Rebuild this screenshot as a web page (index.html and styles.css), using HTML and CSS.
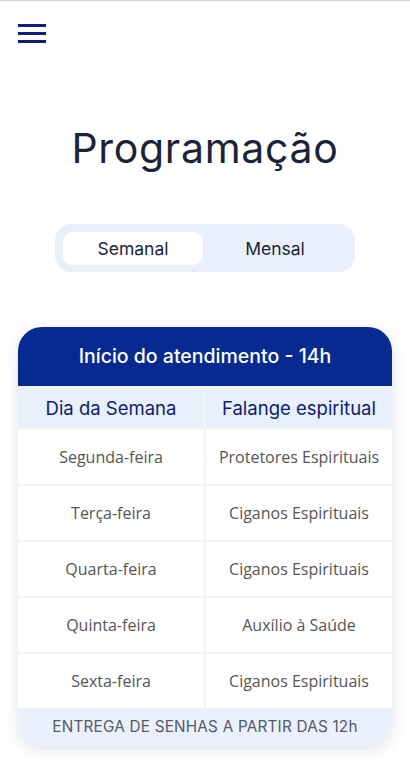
FILE: index.html
```html
<!DOCTYPE html>
<html lang="pt">
<head>
<meta charset="utf-8">
<title>Programação</title>
<link rel="stylesheet" href="styles.css">
</head>
<body>
<div class="page">
  <header class="topbar">
    <button class="menu" aria-label="Menu">
      <svg width="28" height="20" viewBox="0 0 28 20"><rect x="0" y="1" width="28" height="3" fill="#0b1f80"/><rect x="0" y="9" width="28" height="3" fill="#0b1f80"/><rect x="0" y="17" width="28" height="3" fill="#0b1f80"/></svg>
    </button>
  </header>
  <h1 class="title">Programação</h1>
  <div class="toggle">
    <button class="tab active">Semanal</button>
    <button class="tab">Mensal</button>
  </div>
  <section class="card">
    <div class="card-head">Início do atendimento - 14h</div>
    <div class="grid">
      <div class="th">Dia da Semana</div>
      <div class="th">Falange espiritual</div>
      <div class="td">Segunda-feira</div>
      <div class="td">Protetores Espirituais</div>
      <div class="td">Terça-feira</div>
      <div class="td">Ciganos Espirituais</div>
      <div class="td">Quarta-feira</div>
      <div class="td">Ciganos Espirituais</div>
      <div class="td">Quinta-feira</div>
      <div class="td">Auxílio à Saúde</div>
      <div class="td">Sexta-feira</div>
      <div class="td">Ciganos Espirituais</div>
    </div>
    <div class="card-foot">ENTREGA DE SENHAS A PARTIR DAS 12h</div>
  </section>
</div>
</body>
</html>
```
FILE: styles.css
```css
* { box-sizing: border-box; }
html, body { margin: 0; padding: 0; background: #fff; }
body { font-family: "Open Sans", sans-serif; }
.page {
  border-top: 1px solid #cfcfcf;
  min-height: 768px;
  display: flex;
  flex-direction: column;
}
.topbar { padding: 22px 18px 0; height: 52px; }
.menu { border: 0; background: none; padding: 0; display: block; width: 28px; height: 20px; }
.menu svg { display: block; }
.title {
  margin: 71px 0 0;
  text-align: center;
  font-family: Inter, "Noto Sans", sans-serif;
  font-weight: 400;
  font-size: 41px;
  letter-spacing: 0.7px;
  color: #1b2437;
  line-height: 48px;
}
.toggle {
  margin: 52px auto 0;
  width: 300px;
  height: 48px;
  background: #e9effb;
  border-radius: 16px;
  padding: 8px;
  display: grid;
  grid-template-columns: 140px 1fr;
}
.tab {
  border: 0;
  background: transparent;
  font-family: Inter, "Noto Sans", sans-serif;
  font-size: 17.5px;
  color: #1b2437;
  border-radius: 10px;
  padding: 0;
  height: 33px;
}
.tab.active { background: #fff; }
.card {
  margin: 55px 18px 0;
  border-radius: 24px;
  overflow: hidden;
  background: #fff;
  box-shadow: 0 5px 16px rgba(20, 40, 90, 0.13);
}
.card-head {
  background: #062a8f;
  color: #fff;
  height: 59px;
  display: flex;
  align-items: center;
  justify-content: center;
  font-family: Inter, "Noto Sans", sans-serif;
  font-size: 19.5px;
  font-weight: 500;
  padding-bottom: 2px;
}
.grid {
  display: grid;
  grid-template-columns: 186px 1fr;
  gap: 2px;
  background: #f2f3f5;
  padding-top: 2px;
}
.th {
  background: #e8f0fc;
  height: 40px;
  display: flex;
  align-items: center;
  justify-content: center;
  font-family: Inter, "Noto Sans", sans-serif;
  font-size: 18.5px;
  color: #0d1c6e;
}
.td {
  background: #fff;
  height: 54px;
  display: flex;
  align-items: center;
  justify-content: center;
  font-size: 16px;
  color: #555;
}
.card-foot {
  background: #eaf1fc;
  height: 37px;
  display: flex;
  align-items: center;
  justify-content: center;
  font-family: Inter, "Noto Sans", sans-serif;
  font-size: 15.3px;
  color: #555a66;
  letter-spacing: 0.2px;
}
```
